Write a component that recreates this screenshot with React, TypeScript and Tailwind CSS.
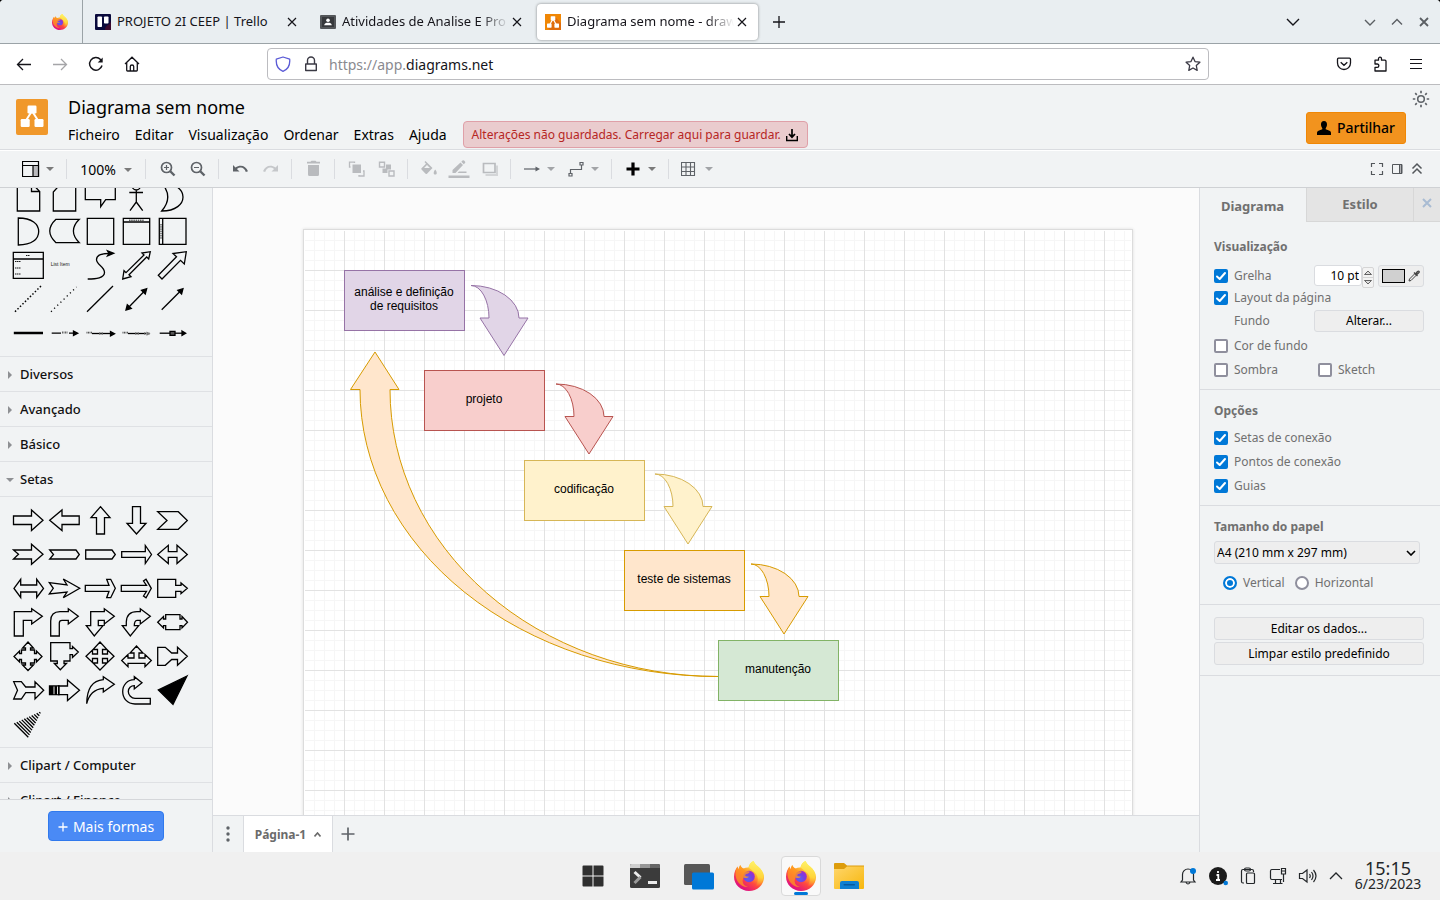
import type { ReactNode } from 'react';

/* ---------- shared helpers ---------- */

function Glyph({ size = 16, children, className = '' }: { size?: number; children: ReactNode; className?: string }) {
  return (
    <svg
      width={size}
      height={size}
      viewBox={`0 0 ${size} ${size}`}
      fill="none"
      stroke="currentColor"
      className={`shrink-0 ${className}`}
      aria-hidden="true"
    >
      {children}
    </svg>
  );
}

function FirefoxLogo({ size, id }: { size: number; id: string }) {
  return (
    <svg width={size} height={size} viewBox="0 0 30 30" className="shrink-0" aria-hidden="true">
      <defs>
        <linearGradient id={`${id}-body`} x1="0.8" y1="0.1" x2="0.25" y2="0.95">
          <stop offset="0.05" stopColor="#fff44f" />
          <stop offset="0.4" stopColor="#ffa22b" />
          <stop offset="0.62" stopColor="#ff4a3e" />
          <stop offset="0.95" stopColor="#e0127f" />
        </linearGradient>
        <linearGradient id={`${id}-flame`} x1="0.6" y1="0" x2="0.5" y2="1">
          <stop offset="0" stopColor="#fff36b" />
          <stop offset="0.6" stopColor="#ffd53a" />
          <stop offset="1" stopColor="#ff8c2a" stopOpacity="0" />
        </linearGradient>
        <radialGradient id={`${id}-globe`} cx="0.4" cy="0.7" r="0.7">
          <stop offset="0" stopColor="#5a5ff0" />
          <stop offset="0.6" stopColor="#7a3ee0" />
          <stop offset="1" stopColor="#a52bc8" />
        </radialGradient>
      </defs>
      <path
        d="M19.500 0c1 2.200 2.500 3.800 4.300 5.300 3.600 3 6.200 6.500 6.200 10.700C30 24 23.300 30 15 30S0 23.800 0 15.800C0 11 2 7.500 3.600 5.500l.6 3 2-4.500c.8 2 1.800 3 3.300 3.500 1.700-.9 3.500-1.200 5-1C15 3.500 17 1.200 19.500 0Z"
        fill={`url(#${id}-body)`}
      />
      <path
        d="M19.500 0c1 2.200 2.500 3.800 4.300 5.300C27.500 8.300 29.600 12 29.300 16c-.4 6-5 9.500-8.800 10 3.500-3.500 4-8 2.500-11.500-1.500-3.300-5-5-8.500-8C15 3.500 17 1.200 19.500 0Z"
        fill={`url(#${id}-flame)`}
      />
      <circle cx="15" cy="15.500" r="5.800" fill={`url(#${id}-globe)`} />
      <path
        d="M3.600 5.500l.6 3 2-4.500c.8 2 1.800 3 3.300 3.500 1 2 2.500 2.800 5.500 2.800 1 0 1 1.200-.5 1.900-1.500.7-3 .7-3.400 2.300 1 1 2.500 1 3.900 1.300-1.500 1.700-4 1.500-5.500.7-2 4-.5 8 4.500 9.500C6 26.500 1.200 19 1.500 12c.2-2.800 1-4.800 2.100-6.500Z"
        fill="#ff9a1f"
        fillOpacity="0.75"
      />
    </svg>
  );
}

/* ---------- browser chrome ---------- */

function CloseGlyph() {
  return (
    <Glyph>
      <path d="M4 4l8 8M12 4l-8 8" strokeWidth="1.200" />
    </Glyph>
  );
}

function BrowserTab({ icon, title, fade = false, active = false }: { icon: ReactNode; title: string; fade?: boolean; active?: boolean }) {
  return (
    <div
      className={`mx-0.5 flex h-9 w-[221px] min-w-0 items-center rounded px-2 ${
        active ? 'bg-white shadow-[0_0_3px_rgba(0,0,0,0.45)]' : ''
      }`}
    >
      {icon}
      <button
        className={`ml-[6px] min-w-0 flex-1 overflow-hidden text-left text-[13px] whitespace-nowrap ${
          fade ? '[mask-image:linear-gradient(to_left,transparent,black_28px)]' : ''
        }`}
      >
        {title}
      </button>
      <button aria-label="Fechar separador">
        <CloseGlyph />
      </button>
    </div>
  );
}

function TabStrip() {
  return (
    <div className="flex h-11 shrink-0 items-center border-b border-[#9ba3a7] bg-[#e9eef1] text-[#15141a]">
      <div className="flex h-full w-[83px] shrink-0 items-center border-r border-[#9ba3a7] pl-[52px]">
        <FirefoxLogo size={16} id="ff-pin" />
      </div>
      <div className="flex min-w-0 pl-0.5">
        <BrowserTab
          title="PROJETO 2I CEEP | Trello"
          icon={
            <svg width="16" height="16" viewBox="0 0 16 16" className="shrink-0" aria-hidden="true">
              <rect width="16" height="16" rx="1" fill="#0a0a3c" />
              <path d="M10 16C10 10 16 12 16 6V16Z" fill="#3c0a2e" />
              <rect x="2.500" y="2.500" width="4.500" height="10.500" rx="0.800" fill="#fff" />
              <rect x="9" y="2.500" width="4.500" height="7" rx="0.800" fill="#fff" />
            </svg>
          }
        />
        <BrowserTab
          fade
          title="Atividades de Analise E Pro"
          icon={
            <svg width="16" height="16" viewBox="0 0 16 16" className="shrink-0" aria-hidden="true">
              <rect y="1" width="16" height="14" rx="1" fill="#54575a" />
              <rect x="2" y="3" width="12" height="10" fill="#37393c" />
              <circle cx="8" cy="6.200" r="1.800" fill="#fff" />
              <path d="M4.200 11.300C4.500 9 6 8.700 8 8.700s3.500.3 3.800 2.600Z" fill="#fff" />
            </svg>
          }
        />
        <BrowserTab
          active
          fade
          title="Diagrama sem nome - draw"
          icon={
            <svg width="16" height="16" viewBox="0 0 16 16" className="shrink-0" aria-hidden="true">
              <rect width="16" height="16" fill="#f08705" />
              <path d="M10 3L16 9V16H5L2 13Z" fill="#df6c0c" />
              <path d="M8 5L4.500 11M8 5l3.500 6" stroke="#fff" strokeWidth="1.200" />
              <rect x="5.700" y="2.200" width="4.600" height="4.200" rx="0.600" fill="#fff" />
              <rect x="2" y="9.500" width="4.600" height="4.200" rx="0.600" fill="#fff" />
              <rect x="9.400" y="9.500" width="4.600" height="4.200" rx="0.600" fill="#fff" />
            </svg>
          }
        />
      </div>
      <button aria-label="Novo separador" className="ml-[11px]">
        <Glyph>
          <path d="M8 2v12M2 8h12" strokeWidth="1.300" />
        </Glyph>
      </button>
      <div className="ml-auto flex items-center pr-2">
        <button aria-label="Listar separadores" className="mr-[61px]">
          <Glyph>
            <path d="M2 5l6 6 6-6" strokeWidth="1.400" />
          </Glyph>
        </button>
        <div className="flex gap-[11px] text-[#5b5f63]">
          <button aria-label="Minimizar">
            <Glyph>
              <path d="M3 6l5 5 5-5" strokeWidth="1.400" />
            </Glyph>
          </button>
          <button aria-label="Maximizar">
            <Glyph>
              <path d="M3 10.500l5-5 5 5" strokeWidth="1.400" />
            </Glyph>
          </button>
          <button aria-label="Fechar">
            <Glyph>
              <path d="M4 4l8 8M12 4l-8 8" strokeWidth="1.800" />
            </Glyph>
          </button>
        </div>
      </div>
    </div>
  );
}

function NavButton({ label, children, faded = false }: { label: string; children: ReactNode; faded?: boolean }) {
  return (
    <button aria-label={label} className={`flex w-9 justify-center ${faded ? 'text-[#a5a5a8]' : 'text-[#15141a]'}`}>
      <Glyph>{children}</Glyph>
    </button>
  );
}

function NavBar() {
  return (
    <div className="flex h-[41px] shrink-0 items-center border-b border-[#bcbcbf] bg-white px-[6px]">
      <div className="flex">
        <NavButton label="Recuar">
          <path d="M15 8.500H2M7 3L1.500 8.500 7 14" strokeWidth="1.300" />
        </NavButton>
        <NavButton label="Avançar" faded>
          <path d="M1 8.500h13M9 3L14.500 8.500 9 14" strokeWidth="1.300" />
        </NavButton>
        <NavButton label="Recarregar">
          <path d="M14 9.500A6.300 6.300 0 1 1 12.500 3.500L13.500 4.800" strokeWidth="1.500" />
          <path d="M14.700 1.500V6.500H9.700Z" fill="currentColor" stroke="none" />
        </NavButton>
        <NavButton label="Início">
          <path d="M1 8L8 1.200 15 8M2.700 6.800V14.200Q2.700 15 3.500 15H12.500Q13.300 15 13.300 14.200V6.800M6.300 15V10.500Q6.300 9 8 9T9.700 10.500V15" strokeWidth="1.300" />
        </NavButton>
      </div>
      <div className="mx-[117px] flex h-8 min-w-0 flex-1 items-center rounded border border-[#bcbcc0] px-[7px]">
        <Glyph>
          <path d="M8 1L14.700 3.200C15.200 9 12.500 13.500 8 15.300 3.500 13.500.8 9 1.300 3.200Z" stroke="#5b5bd6" strokeWidth="1.300" strokeLinejoin="round" />
        </Glyph>
        <Glyph className="ml-3 text-[#3a3944]">
          <path d="M4.500 8V4.500a3.500 3.500 0 0 1 7 0V8M2.700 8h10.600v6.500H2.700Z" strokeWidth="1.400" strokeLinejoin="round" />
        </Glyph>
        <label htmlFor="address" className="ml-[10px] pt-px text-sm text-[#8a8a90]">
          https://app.
        </label>
        <input
          id="address"
          defaultValue="diagrams.net"
          className="min-w-0 flex-1 pt-px text-sm text-[#15141a] outline-none"
        />
        <button aria-label="Adicionar aos marcadores" className="text-[#3a3944]">
          <Glyph>
            <path d="M8 1.200l2 4.400 4.900.6-3.600 3.300.9 4.900L8 12l-4.200 2.400.9-4.900L1.100 6.200 6 5.600Z" strokeWidth="1.300" strokeLinejoin="round" />
          </Glyph>
        </button>
      </div>
      <div className="flex">
        <NavButton label="Pocket">
          <path d="M2.500 2.200H13.500Q14.500 2.200 14.500 3.200V7A6.500 6.500 0 0 1 1.500 7V3.200Q1.500 2.200 2.500 2.200ZM4.700 6.200L8 9.300l3.300-3.100" strokeWidth="1.300" />
        </NavButton>
        <NavButton label="Extensões">
          <path d="M6.500 4.200V2.700a1.500 1.500 0 0 1 3 0V4.200H13Q14 4.200 14 5.200V15H3V11.300H5.200a1.500 1.500 0 0 0 0-3.300H3V4.200Z" strokeWidth="1.300" strokeLinejoin="round" />
        </NavButton>
        <NavButton label="Menu">
          <path d="M2 3.500h12M2 7.500h12M2 12.500h12" strokeWidth="1.200" />
        </NavButton>
      </div>
    </div>
  );
}

/* ---------- application header ---------- */

const menus = ['Ficheiro', 'Editar', 'Visualização', 'Ordenar', 'Extras', 'Ajuda'];

function AppHeader() {
  return (
    <header className="flex h-[65px] shrink-0 border-b border-[#dadce0] bg-[#f1f3f4] pl-4">
      <svg width="32" height="36" viewBox="0 0 32 36" className="mt-[14px] shrink-0" aria-hidden="true">
        <rect width="32" height="36" rx="2" fill="#f0982b" />
        <path d="M16 12L9 23M16 12l7 11" stroke="#fff" strokeWidth="2" />
        <rect x="11.500" y="6.500" width="9" height="8" rx="1.200" fill="#fff" />
        <rect x="4.700" y="20" width="9" height="8" rx="1.200" fill="#fff" />
        <rect x="18.500" y="20" width="9" height="8" rx="1.200" fill="#fff" />
      </svg>
      <div className="ml-5 pt-[10px]">
        <a href="#rename" className="block text-lg leading-6 text-black">
          Diagrama sem nome
        </a>
        <div className="mt-[2px] flex items-center">
          <nav className="flex gap-[15px] text-sm text-black">
            {menus.map((m) => (
              <a key={m} href="#menu">
                {m}
              </a>
            ))}
          </nav>
          <button className="ml-4 flex h-[27px] items-center rounded-sm border border-[#dfa0a8] bg-[#eaccce] px-2 text-xs whitespace-nowrap text-[#b62623]">
            Alterações não guardadas. Carregar aqui para guardar.
            <Glyph size={14} className="ml-1 text-black">
              <path d="M1.700 8v4.500h10.600V8" strokeWidth="1.400" />
              <path d="M7 1v8M4 6l3 3.200L10 6" strokeWidth="1.700" />
            </Glyph>
          </button>
        </div>
      </div>
      <div className="ml-auto flex">
        <button className="mt-[27px] flex h-8 w-[100px] items-center justify-center gap-[6px] rounded-[3px] border border-[#f08705] bg-[#f2931e] text-sm font-medium text-black">
          <svg width="14" height="14" viewBox="0 0 14 14" aria-hidden="true">
            <path d="M7 0C9 0 10.200 1.500 10 3.800 9.900 5.500 9.200 6.500 8.700 7.200V8.200L12.500 9.800C13.700 10.300 14 11.200 14 12.200V14H0V12.200C0 11.200.3 10.300 1.500 9.800L5.300 8.200V7.200C4.800 6.500 4.100 5.500 4 3.800 3.800 1.500 5 0 7 0Z" />
          </svg>
          Partilhar
        </button>
        <button aria-label="Aparência" className="mt-[5px] mr-[10px] ml-[6px] self-start text-[#5f6368]">
          <Glyph size={18}>
            <circle cx="9" cy="9" r="3.300" strokeWidth="1.600" />
            <path d="M9 .8v2.500M9 14.700v2.500M.8 9h2.500M14.700 9h2.500M3.200 3.200l1.600 1.600M13.200 13.200l1.600 1.600M14.800 3.200l-1.600 1.600M4.800 13.200l-1.600 1.600" strokeWidth="1.700" />
          </Glyph>
        </button>
      </div>
    </header>
  );
}

/* ---------- toolbar ---------- */

function Caret({ className = 'text-[#7a7a7a]' }: { className?: string }) {
  return (
    <svg width="8" height="4" viewBox="0 0 8 4" fill="currentColor" className={className} aria-hidden="true">
      <path d="M0 0H8L4 4Z" />
    </svg>
  );
}

function Sep() {
  return <span className="mx-[6px] h-5 w-px bg-[#dadce0]" />;
}

function Tool({ label, children, className = 'text-[#5f6368]' }: { label: string; children: ReactNode; className?: string }) {
  return (
    <button aria-label={label} className={`flex w-[30px] justify-center ${className}`}>
      <Glyph size={18}>{children}</Glyph>
    </button>
  );
}

function DropTool({ label, children, className, caret }: { label: string; children: ReactNode; className: string; caret?: string }) {
  return (
    <button aria-label={label} className={`flex w-11 items-center justify-center gap-[6px] ${className}`}>
      <Glyph size={18}>{children}</Glyph>
      <Caret className={caret} />
    </button>
  );
}

function Toolbar() {
  return (
    <div className="flex h-[38px] shrink-0 items-center border-t border-b border-t-white border-b-[#cfd1d4] bg-[#f1f3f4] pl-4">
      <DropTool label="Vista" className="text-black">
        <path d="M.5 1.500H16.500V16.500H.5ZM.5 5.500H16.500" strokeWidth="1.200" />
        <path d="M11 5.500H16.500V16.500H11Z" fill="#b9b9bc" strokeWidth="1.200" />
      </DropTool>
      <Sep />
      <button className="flex w-[66px] items-center justify-center gap-2 pt-[2px] text-sm text-black">
        100% <Caret />
      </button>
      <Sep />
      <Tool label="Ampliar">
        <circle cx="8.500" cy="7.500" r="5" strokeWidth="1.700" />
        <path d="M12 11l4.500 4.500" strokeWidth="2.400" />
        <path d="M8.500 5v5M6 7.500h5" strokeWidth="1.200" />
      </Tool>
      <Tool label="Reduzir">
        <circle cx="8.500" cy="7.500" r="5" strokeWidth="1.700" />
        <path d="M12 11l4.500 4.500" strokeWidth="2.400" />
        <path d="M6 7.500h5" strokeWidth="1.200" />
      </Tool>
      <Sep />
      <Tool label="Anular">
        <path d="M2 5V11.500H8.500L5.900 8.900C9.500 6.300 13.500 7.500 14.800 12L17 11.300C15 5.500 9 4 4.500 7.500Z" fill="currentColor" stroke="none" />
      </Tool>
      <Tool label="Refazer" className="text-[#c5c7ca]">
        <path d="M17 5V11.500H10.500L13.100 8.900C9.500 6.300 5.500 7.500 4.200 12L2 11.300C4 5.500 10 4 14.500 7.500Z" fill="currentColor" stroke="none" />
      </Tool>
      <Sep />
      <Tool label="Apagar" className="text-[#b9bbbe]">
        <path d="M3 1.700H6.500L7.500.8H11.500L12.500 1.700H16V3.500H3ZM4 5H15V14.500Q15 16 13.500 16H5.500Q4 16 4 14.500Z" fill="currentColor" stroke="none" />
      </Tool>
      <Sep />
      <Tool label="Para a frente" className="text-[#b9bbbe]">
        <path d="M5.500 4.500H14V13H5.500Z" fill="currentColor" stroke="none" />
        <path d="M3.500 7H2.500V2.200H7.500V3M12 15V16H17V11H16" strokeWidth="1.300" />
      </Tool>
      <Tool label="Para trás" className="text-[#b9bbbe]">
        <path d="M2.500 2.200H7.500V7H2.500ZM12 11H17V16H12Z" strokeWidth="1.400" />
        <path d="M9 4.500H14V9.500H10.500V13H5.500V8.500H9Z" fill="currentColor" stroke="none" />
      </Tool>
      <Sep />
      <Tool label="Cor de preenchimento" className="text-[#b9bbbe]">
        <path d="M5.500 1L12.500 8 7 13.700Q6.300 14.300 5.600 13.700L1.500 9.500Q1 8.800 1.500 8.200L6 3.700L4.500 2ZM4 8H10L7 5Z" fill="currentColor" stroke="none" />
        <path d="M15.200 9.500C17.500 12.500 17 14.500 15.200 14.500S13 12.500 15.200 9.500Z" fill="currentColor" stroke="none" />
      </Tool>
      <button aria-label="Cor da linha" className="flex w-[30px] justify-center text-[#b9bbbe]">
        <svg width="22" height="20" viewBox="0 0 22 20" fill="currentColor" aria-hidden="true">
          <path d="M4.500 14V11L12.500 3.500 15 6 7.500 14ZM13.300 2.700L14.500 1.500Q15.300.8 16 1.500L17 2.500Q17.700 3.300 17 4L15.800 5.200ZM11 12.500H18.500V14H9.500ZM.5 16.500H21.500V19H.5Z" />
        </svg>
      </button>
      <Tool label="Sombra" className="text-[#b9bbbe]">
        <path d="M5.500 14V16H18V5.500H16V14Z" fill="#d3d5d7" stroke="none" />
        <path d="M3.500 3.500H15V12.500H3.500Z" strokeWidth="1.700" />
      </Tool>
      <Sep />
      <DropTool label="Ligação" className="text-[#5f6368]" caret="text-[#a2a4a7]">
        <path d="M1 9H14" strokeWidth="1.200" />
        <path d="M12.500 6.500L17 9 12.500 11.500Z" fill="currentColor" stroke="none" />
      </DropTool>
      <DropTool label="Pontos de passagem" className="text-[#5f6368]" caret="text-[#a2a4a7]">
        <path d="M3.500 13.500V9.500H14.500V5M2 13.500H5V16H2ZM13 2.500H16V5H13Z" strokeWidth="1.200" />
      </DropTool>
      <Sep />
      <DropTool label="Inserir" className="text-black">
        <path d="M9 2.500V15.500M2.500 9H15.500" strokeWidth="3.200" />
      </DropTool>
      <Sep />
      <DropTool label="Tabela" className="text-[#5f6368]" caret="text-[#a2a4a7]">
        <path d="M.5 2.500H13.500V15.500H.5ZM5 2.500V15.500M9.500 2.500V15.500M.5 7H13.500M.5 11.500H13.500" strokeWidth="1.100" />
      </DropTool>
      <div className="ml-auto flex gap-1 pr-[15px] text-[#53575b]">
        <button aria-label="Ecrã inteiro">
          <Glyph>
            <path d="M2.500 6V2.500H6M10 2.500H13.500V6M13.500 10V13.500H10M6 13.500H2.500V10" strokeWidth="1.200" />
          </Glyph>
        </button>
        <button aria-label="Formatar">
          <Glyph>
            <path d="M10.500 3.500H13V12.500H10.500Z" fill="#b0b0b3" strokeWidth="1" />
            <path d="M3.500 3.500H12.500V12.500H3.500Z" strokeWidth="1" />
          </Glyph>
        </button>
        <button aria-label="Recolher">
          <Glyph>
            <path d="M3.500 7.500L8 3l4.500 4.500M3.500 12.500L8 8l4.500 4.500" strokeWidth="1.500" />
          </Glyph>
        </button>
      </div>
    </div>
  );
}

/* ---------- shape library ---------- */

const arrowShapes: ReactNode[] = [
  <path d="M3.500 13H21.500V7L33 17.300 21.500 27.600V21.500H3.500Z" />,
  <path d="M33.200 13H16V7L3.700 17.300 16 27.600V21.500H33.200Z" />,
  <path d="M18.500 3.700L28 14.700H22.500V31H14.500V14.700H9Z" />,
  <path d="M14.500 3.700H22.500V20.300H28L18.500 31 9 20.300H14.500Z" />,
  <path d="M3.700 8.700H24.300L33.300 17.500 24.300 26.300H3.700L13 17.500Z" />,
  <path d="M3.500 13H21.500V7.300L33 17.300 21.500 27.300V22H3.500L8.500 17.300Z" />,
  <path d="M3.700 13H30L33.300 17.500 30 22H3.700L7.500 17.500Z" />,
  <path d="M3.700 13H30L33.300 17.500 30 22H3.700Z" />,
  <path d="M3.700 14.700H27.300V8.500L33.500 17.500 27.300 26.500V20.300H3.700Z" />,
  <path d="M3.700 17.400L14.300 8.300V14.700H23V8.300L33.300 17.400 23 26.500V20.300H14.300V26.500Z" />,
  <path d="M4 17.400L10.700 8.300V14H26.700V8.300L33.500 17.400 26.700 26.500V21H10.700V26.500Z" />,
  <path d="M3.300 11.700L21 14 17.300 8 33.700 17.300 17.300 26.700 21 21 3.300 23 7.300 17.300Z" />,
  <path d="M3.300 14.300H27L24.700 8.300H28.700L33.300 17.300 28.700 26.700H24.700L27 20.300H3.300Z" />,
  <path d="M3.300 14.300H28.500L25.500 10 28 8.300 33.300 17.300 28 26.700 25.500 25 28.500 20.300H3.300Z" />,
  <path d="M3.700 8.300H21.700V14.300H27V12L33.300 17.300 27 22.700V20.300H21.700V26.300H3.700Z" />,
  <path d="M4.300 31V6.700H21.700V3.700L32.300 11.300 21.700 19V15.300H13.300V31Z" />,
  <path d="M4.700 31V16Q4.700 6.700 14 6.700H22.300V3.700L32.300 11.300 22.300 19V15.300H16Q13.300 15.300 13.300 18V31Z" />,
  <path d="M4.300 20.700H8.700V6.700H22.300V3.700L32.300 11.300 22.300 19V15.300H16.300V20.700H21L12.300 31ZM22.300 15.300V20.700" />,
  <path d="M4.300 20.700H8.300V17Q8.700 6.700 19 6.700H22.300V3.700L32.300 11.300 22.300 19V15.300H19Q16.300 15.500 16.300 20.700H20.700L12.300 31Z" />,
  <path d="M3.700 17.300L9.500 11.500V14H11.700V9.700H26V14H28V11.500L33.500 17.300 28 23V20.700H26V24.700H11.700V20.700H9.500V23Z" />,
  <path d="M18 3L23.500 9H20.500V11H24.500V14.500H26.500V12L32 17.500 26.500 23V20.500H24.500V24H20.500V26H23.500L18 31.500 12.500 26H15.500V24H11.500V20.500H9.500V23L4 17.500 9.500 12V14.500H11.500V11H15.500V9H12.500Z" />,
  <path d="M4.700 3.700H24V9.700H26.500V7.500L32.300 13 26.500 18.500V15.700H24V22H18V24.500H20.500L14.300 30.700 8.300 24.500H11.300V22H4.700Z" />,
  <path d="M18 3L25 10.500H20.500V15H25.500V11L32 17.200 25.500 23.500V19.500H20.500V24H25L18 31 11 24H15.500V19.500H10.500V23.500L4 17.200 10.500 11V15H15.500V10.500H11Z" />,
  <path d="M18.500 7L25 14H21V19H27V15.500L33.300 21.500 27 27.700V24.300H10V27.700L3.700 21.500 10 15.500V19H16V14H12Z" />,
  <path d="M3.700 8.300H11.300L17.700 14H23.500V8.300L33.300 17.300 23.500 26.300V20.500H17.700L11.300 26.300H3.700Z" />,
  <path d="M3.700 8.700H11.300L15.700 14H25V8.700L33.700 17.300 25 26V19.700H15.700L11.300 26H3.700L7.500 17.300Z" />,
  <>
    <path d="M12.500 13H21.500V7L33.500 17.300 21.500 27.600V21.700H12.500Z" />
    <path d="M3.500 13H13V21.700H3.500Z" fill="black" />
    <path d="M8 13.500V21.200M11.500 13.500V21.200" stroke="white" strokeWidth="0.900" />
  </>,
  <path d="M4.700 30.700Q5 8 21.300 6.700V3.700L32.300 11.300 21.300 19V15.300Q8 16.500 4.700 30.700Z" />,
  <path d="M32.300 25.300V31H17C9 31 4.700 25 4.700 18.500S9.500 6.700 16.300 6.700V3.700L24 9.700 16.300 16V12.700C13 12.700 10.300 15 10.300 18.500S13.500 25.300 17 25.300Z" />,
  <path d="M33 3L4.300 17 19 31.300Z" fill="black" />,
  <path
    d={Array.from({ length: 11 }, (_, i) => {
      const t = i / 11;
      const mix = (a: number, b: number) => (a + (b - a) * t).toFixed(1);
      return `M${mix(4.3, 31.7)} ${mix(16.3, 4)}L${mix(18.3, 31.7)} ${mix(30.3, 4)}`;
    }).join('')}
  />,
];

const generalShapes: ReactNode[] = [
  <path d="M7.300 3H21.500L29.700 11.500V31H7.300ZM21.500 3V11.500H29.700" />,
  <path d="M15.500 3H29.700V31H7.300V12Z" />,
  <path d="M3.300 3H33.300V19.700H23.700L18.700 26.700V19.700H3.300Z" />,
  <path d="M18.300 10V22M11.300 12.500H25M18.300 22L12 30.700M18.300 22L24.700 30.700M22.300 6a4 4 0 1 1-8 0a4 4 0 1 1 8 0" />,
  <path d="M7.700 3C22 3 29 10 29 17S22 31 7.700 31C15.500 22 15.500 12 7.700 3Z" />,
  <path d="M8.300 4C22 4 28.700 10 28.700 17.500S22 31 8.300 31Z" />,
  <path d="M10 5.300H33.300Q21.500 17 33.300 28.700H10Q-2.500 17 10 5.300Z" />,
  <path d="M5.300 4.300H31.700V30.300H5.300Z" />,
  <>
    <path d="M5.300 4.300H31.700V30.300H5.300ZM5.300 8H31.700" />
    <path d="M11 6.200H26" strokeWidth="0.900" strokeDasharray="1.500 0.700" />
  </>,
  <>
    <path d="M5.300 4.300H32V30.300H5.300ZM8.700 4.300V30.300" />
    <path d="M7 10V25" strokeWidth="0.900" strokeDasharray="1.500 0.700" />
  </>,
  <>
    <path d="M3.300 4.300H33.300V30.300H3.300ZM3.300 11H33.300" />
    <path d="M16 7.500H20M5 13.500H11M5 20H11M5 26H11" strokeWidth="0.900" strokeDasharray="1.500 0.500" />
  </>,
  <text x="4.700" y="18" fontSize="5" fill="#222" stroke="none" fontFamily="Liberation Sans">
    List Item
  </text>,
  <>
    <path d="M5.700 31C14 31 22.500 30 22.500 24.500C22.500 18 14.500 17 14.500 11.500C14.500 7 20 5.300 29 5.300" />
    <path d="M25.500 2.800L31.700 5.300 25.500 7.900 27 5.300Z" fill="black" />
  </>,
  <path d="M32.300 3.700L30.700 11 28.700 9 11 26.700 13 28.700 4.700 31 6 22.700 8 24.700 26 7 24 5Z" />,
  <path d="M32.300 3.700L30.300 16 26.500 12.300 8 31 4.300 27.300 22.500 8.700 19 5.500Z" />,
  <path d="M5 29.700L31 4" strokeDasharray="1.500 2" strokeWidth="1.500" />,
  <path d="M5 29.700L30.500 5" strokeDasharray="1.200 3.200" strokeWidth="1.300" />,
  <path d="M5 29.700L31 4" />,
  <>
    <path d="M10 26L27 8.500" />
    <path d="M28.700 6.700L27.300 12 23.500 8.200ZM8 28L9.300 22.700 13.300 26.500Z" fill="black" />
  </>,
  <>
    <path d="M7.700 27.700L27 8.500" />
    <path d="M29 6.700L27.600 12 23.800 8.200Z" fill="black" />
  </>,
  <path d="M3.800 17H33" strokeWidth="2.500" />,
  <>
    <path d="M5.700 17.200H15M23 17.200H29" />
    <path d="M16 16.500H22" strokeWidth="1.800" strokeDasharray="1 0.500" stroke="#666" />
    <path d="M27.500 15L31.700 17.200 27.500 19.400Z" fill="black" />
  </>,
  <>
    <path d="M10 17.500H30" />
    <path d="M4.500 16.700H10M17 17.500H21" strokeWidth="1.800" strokeDasharray="1 0.500" stroke="#555" />
    <path d="M28.500 15.600L32.500 17.700 28.500 19.800Z" fill="black" />
  </>,
  <>
    <path d="M10 17.500H28" />
    <path d="M4.500 16.700H10M17 17.500H21M26 17.500H32" strokeWidth="1.800" strokeDasharray="1 0.500" stroke="#555" />
    <path d="M28.500 15.600L32.500 17.700 28.500 19.800Z" fill="#777" stroke="none" />
  </>,
  <>
    <path d="M5.700 17.200H29" />
    <path d="M16 15.300H21V19.300H16Z" fill="#555" />
    <path d="M28 15L31.700 17.200 28 19.400Z" fill="black" />
  </>,
];

function ShapeGrid({ shapes, name }: { shapes: ReactNode[]; name: string }) {
  return (
    <div className="grid grid-cols-[repeat(5,36px)] border-b border-[#dfe1e4] py-[6px] pl-[10px]">
      {shapes.map((s, i) => (
        <button key={i} aria-label={`${name} ${i + 1}`} className="h-[34px]">
          <svg width="36" height="34" viewBox="0 0 36 34" fill="none" stroke="black" strokeWidth="1.300" aria-hidden="true">
            {s}
          </svg>
        </button>
      ))}
    </div>
  );
}

function SectionTitle({ title, open = false }: { title: string; open?: boolean }) {
  return (
    <button className="flex h-[35px] w-full items-center border-b border-[#dfe1e4] pt-px pl-[6px] text-left text-[13px] font-medium text-[#111]">
      <svg width="8" height="8" viewBox="0 0 8 8" fill="#8e9093" className="mr-[6px]" aria-hidden="true">
        <path d={open ? 'M0 2H8L4 6Z' : 'M2 0L6 4 2 8Z'} />
      </svg>
      {title}
    </button>
  );
}

function Sidebar() {
  return (
    <aside className="flex w-[213px] shrink-0 flex-col border-r border-[#dadce0] bg-[#f1f3f4]">
      <div className="min-h-0 flex-1 overflow-hidden border-b border-[#d5d7da]">
        <div className="-mt-[14px]">
          <ShapeGrid shapes={generalShapes} name="Geral" />
          <SectionTitle title="Diversos" />
          <SectionTitle title="Avançado" />
          <SectionTitle title="Básico" />
          <SectionTitle title="Setas" open />
          <ShapeGrid shapes={arrowShapes} name="Seta" />
          <SectionTitle title="Clipart / Computer" />
          <SectionTitle title="Clipart / Finance" />
        </div>
      </div>
      <div className="flex h-[52px] shrink-0 justify-center pt-[11px]">
        <button className="flex h-[30px] w-[116px] items-center justify-center gap-[5px] rounded-sm border border-[#3079ed] bg-[#4a8af5] pt-px text-sm text-white">
          <svg width="10" height="10" viewBox="0 0 10 10" stroke="white" strokeWidth="1.300" aria-hidden="true">
            <path d="M5 0.500V9.500M0.500 5H9.500" />
          </svg>
          Mais formas
        </button>
      </div>
    </aside>
  );
}

/* ---------- diagram ---------- */

const nodes = [
  { text: 'análise e definição de requisitos', className: 'left-[40px] top-[40px] border-[#9673a6] bg-[#e1d5e7]' },
  { text: 'projeto', className: 'left-[120px] top-[140px] border-[#b85450] bg-[#f8cecc]' },
  { text: 'codificação', className: 'left-[220px] top-[230px] border-[#d6b656] bg-[#fff2cc]' },
  { text: 'teste de sistemas', className: 'left-[320px] top-[320px] border-[#d79b00] bg-[#ffe6cc]' },
  { text: 'manutenção', className: 'left-[414px] top-[410px] border-[#82b366] bg-[#d5e8d4]' },
];

const jumps = [
  { x: 200, y: 125.5, fill: '#e1d5e7', stroke: '#9673a6' },
  { x: 285, y: 224, fill: '#f8cecc', stroke: '#b85450' },
  { x: 384, y: 314, fill: '#fff2cc', stroke: '#d6b656' },
  { x: 480, y: 404, fill: '#ffe6cc', stroke: '#d79b00' },
];

function Canvas() {
  return (
    <main className="flex min-w-0 flex-1 flex-col">
      <div className="min-h-0 flex-1 overflow-hidden bg-[#fbfbfb] pt-[41px] pl-[90px]">
        <div className="relative h-[1170px] w-[830px] border border-[#dcdcdc] bg-white shadow-[0_0_3px_rgba(0,0,0,0.12)]">
          <svg width="828" height="1168" viewBox="0 0 828 1168" className="block" aria-hidden="true">
            <defs>
              <pattern id="grid" width="40" height="40" patternUnits="userSpaceOnUse">
                <path d="M10.500 0V40M20.500 0V40M30.500 0V40M0 10.500H40M0 20.500H40M0 30.500H40" stroke="#f6f6f6" />
                <path d="M0.500 0V40M0 0.500H40" stroke="#e2e2e2" />
              </pattern>
            </defs>
            <rect x="1" y="1" width="826" height="1166" fill="url(#grid)" />
            {jumps.map((j) => (
              <path
                key={j.x}
                transform={`translate(${j.x} ${j.y})`}
                d="M-33 -70A48 32.500 0 0 1 15 -37.500H24L0 0L-24 -37.500H-15A18 32.500 0 0 0 -33 -70Z"
                fill={j.fill}
                stroke={j.stroke}
              />
            ))}
            <path
              d="M414.500 446.500A358 287 0 0 1 56 159.500H46.500L71 122L95 159.500H86A328 287 0 0 0 414.500 446.500Z"
              fill="#ffe6cc"
              stroke="#d79b00"
            />
          </svg>
          {nodes.map((n) => (
            <div
              key={n.text}
              className={`absolute flex h-[61px] w-[121px] items-center justify-center border pr-[9px] pb-1 pl-2 text-center font-['Liberation_Sans',sans-serif] text-xs leading-[14px] text-black ${n.className}`}
            >
              {n.text}
            </div>
          ))}
        </div>
      </div>
      <div className="flex h-[37px] shrink-0 items-center border-t border-[#dadce0] bg-[#f1f3f4] text-[#5f6368]">
        <button aria-label="Páginas" className="flex w-[30px] justify-center">
          <svg width="4" height="16" viewBox="0 0 4 16" fill="#5f6368" aria-hidden="true">
            <circle cx="2" cy="2" r="1.700" />
            <circle cx="2" cy="8" r="1.700" />
            <circle cx="2" cy="14" r="1.700" />
          </svg>
        </button>
        <button className="flex h-full w-[90px] items-center justify-center gap-2 border-x border-[#dadce0] bg-white pt-px text-xs font-bold text-[#6b6b6b]">
          Página-1
          <svg width="7" height="5" viewBox="0 0 7 5" fill="none" stroke="#6b6b6b" strokeWidth="1.600" aria-hidden="true">
            <path d="M0.500 4.500L3.500 1 6.500 4.500" />
          </svg>
        </button>
        <button aria-label="Inserir página" className="ml-[7px]">
          <Glyph>
            <path d="M8 1.500v13M1.500 8h13" strokeWidth="1.700" />
          </Glyph>
        </button>
      </div>
    </main>
  );
}

/* ---------- format panel ---------- */

function Check({ id, label, checked = false, className = '' }: { id: string; label: string; checked?: boolean; className?: string }) {
  return (
    <div className={`flex items-center gap-[6px] ${className}`}>
      <span className="grid size-[14px] shrink-0">
        <input
          id={id}
          type="checkbox"
          defaultChecked={checked}
          className="peer col-start-1 row-start-1 size-[14px] appearance-none rounded-xs border-2 border-[#8f8f9d] bg-white checked:border-[#0078d7] checked:bg-[#0078d7]"
        />
        <svg
          viewBox="0 0 14 14"
          fill="none"
          stroke="white"
          strokeWidth="2"
          className="pointer-events-none col-start-1 row-start-1 hidden size-[14px] peer-checked:block"
          aria-hidden="true"
        >
          <path d="M3 7.500L5.700 10 11 4" strokeLinecap="round" strokeLinejoin="round" />
        </svg>
      </span>
      <label htmlFor={id} className="whitespace-nowrap">
        {label}
      </label>
    </div>
  );
}

function Radio({ id, label, checked = false }: { id: string; label: string; checked?: boolean }) {
  return (
    <div className="flex items-center gap-[6px]">
      <input
        id={id}
        type="radio"
        name="orientation"
        defaultChecked={checked}
        className="size-[14px] appearance-none rounded-full border-2 border-[#8f8f9d] bg-white checked:border-[#0078d7] checked:bg-[#0078d7] checked:shadow-[inset_0_0_0_2px_white]"
      />
      <label htmlFor={id}>{label}</label>
    </div>
  );
}

const panelButton = 'rounded-[3px] border border-[#dadce0] bg-[#eeeeee] text-xs text-black';

function FormatPanel() {
  return (
    <aside className="w-[241px] shrink-0 overflow-hidden border-l border-[#dadce0] bg-[#f1f3f4] text-xs text-[#707070]">
      <div className="flex h-[34px] text-[13px] font-bold">
        <button className="w-[106px] pt-1 pr-px">Diagrama</button>
        <button className="flex-1 border-b border-l border-[#d7d7d7] bg-[#e4e4e4] pt-px">Estilo</button>
        <button aria-label="Ocultar" className="flex w-[27px] items-center justify-center border-b border-l border-[#d7d7d7] bg-[#e4e4e4] pr-px pb-[3px] text-[#a9bcd3]">
          <svg width="10" height="10" viewBox="0 0 10 10" stroke="currentColor" strokeWidth="2" aria-hidden="true">
            <path d="M1 1l8 8M9 1l-8 8" />
          </svg>
        </button>
      </div>
      <section className="border-b border-[#dadce0] px-[14px] pt-3 pb-[7px]">
        <h2 className="mb-[6px] h-6 leading-[26px] font-bold">Visualização</h2>
        <div className="flex h-[23px] items-center">
          <Check id="grid-on" label="Grelha" checked className="w-[100px]" />
          <input
            aria-label="Tamanho da grelha"
            defaultValue="10 pt"
            className="h-[21px] w-12 rounded-[3px] border border-[#dadce0] bg-white pr-[2px] text-right text-xs text-black"
          />
          <span className="mt-1 flex h-[21px] w-3 flex-col rounded-[2px] border border-[#d5d5d5] bg-[#f3f3f3]">
            <button aria-label="Aumentar" className="flex flex-1 items-center justify-center border-b border-[#d5d5d5]">
              <svg width="8" height="5" viewBox="0 0 8 5" fill="#ddd" stroke="#555" strokeWidth="0.900" aria-hidden="true">
                <path d="M0.500 4.500L4 1 7.500 4.500Z" />
              </svg>
            </button>
            <button aria-label="Diminuir" className="flex flex-1 items-center justify-center">
              <svg width="8" height="5" viewBox="0 0 8 5" fill="#ddd" stroke="#555" strokeWidth="0.900" aria-hidden="true">
                <path d="M0.500 0.500L4 4 7.500 0.500Z" />
              </svg>
            </button>
          </span>
          <button aria-label="Cor da grelha" className="ml-1 flex h-[22px] w-[46px] items-center justify-center gap-[3px] rounded-[3px] border border-[#dadce0] bg-[#eeeeee]">
            <span className="h-[14px] w-[23px] border border-black bg-[#d0d0d0]" />
            <Glyph size={12} className="text-[#444]">
              <path d="M1 11L1.500 9 7 3.500 8.500 5 3 10.500Z" strokeWidth="1" />
              <path d="M6 2.500L9.500 6M8 3.500L9.500 1.500Q10.500.8 11 1.500T10.500 3L8.800 4.500" strokeWidth="1.400" />
            </Glyph>
          </button>
        </div>
        <Check id="page-view" label="Layout da página" checked className="h-[22px]" />
        <div className="flex h-6 items-center pl-5">
          <span className="w-20">Fundo</span>
          <button className={`h-[22px] w-[110px] ${panelButton}`}>Alterar...</button>
        </div>
        <Check id="bg-color" label="Cor de fundo" className="mt-px h-6" />
        <div className="flex h-6 items-center">
          <Check id="shadow" label="Sombra" className="w-[104px]" />
          <Check id="sketch" label="Sketch" />
        </div>
      </section>
      <section className="border-b border-[#dadce0] px-[14px] pt-2 pb-[7px]">
        <h2 className="mb-1 h-6 leading-[26px] font-bold">Opções</h2>
        <Check id="arrows" label="Setas de conexão" checked className="h-6" />
        <Check id="points" label="Pontos de conexão" checked className="h-6" />
        <Check id="guides" label="Guias" checked className="h-6" />
      </section>
      <section className="border-b border-[#dadce0] px-[14px] pt-2 pb-[9px]">
        <h2 className="mb-[3px] h-6 leading-[26px] font-bold">Tamanho do papel</h2>
        <div className="grid w-[206px] items-center">
          <select aria-label="Tamanho do papel" className={`col-start-1 row-start-1 h-[23px] appearance-none pl-[2px] ${panelButton}`}>
            <option>A4 (210 mm x 297 mm)</option>
          </select>
          <svg width="10" height="6" viewBox="0 0 10 6" fill="none" stroke="black" strokeWidth="1.600" className="pointer-events-none col-start-1 row-start-1 mr-1 justify-self-end" aria-hidden="true">
            <path d="M1 1L5 5 9 1" />
          </svg>
        </div>
        <div className="mt-[7px] flex h-6 items-center gap-[10px] pl-[9px]">
          <Radio id="vertical" label="Vertical" checked />
          <Radio id="horizontal" label="Horizontal" />
        </div>
      </section>
      <section className="flex flex-col gap-[2px] border-b border-[#dadce0] px-[14px] pt-3 pb-[10px]">
        <button className={`h-[23px] w-[210px] ${panelButton}`}>Editar os dados...</button>
        <button className={`h-[23px] w-[210px] ${panelButton}`}>Limpar estilo predefinido</button>
      </section>
    </aside>
  );
}

/* ---------- desktop taskbar ---------- */

function TrayButton({ label, children }: { label: string; children: ReactNode }) {
  return (
    <button aria-label={label} className="flex w-[30px] justify-center">
      <Glyph size={20}>{children}</Glyph>
    </button>
  );
}

function Taskbar() {
  return (
    <footer className="grid h-12 shrink-0 grid-cols-[1fr_auto_1fr] items-center bg-[#f0f0f0] text-[#232629]">
      <span />
      <div className="flex items-center pr-[2px]">
        <button aria-label="Iniciar" className="flex w-[52px] justify-center">
          <svg width="22" height="22" viewBox="0 0 22 22" fill="#2f2f2f" aria-hidden="true">
            <path d="M0.500 1.500Q.5.500 1.500.5H10.500V10.500H.5ZM11.500.5H20.500Q21.500.5 21.500 1.500V10.500H11.500ZM.5 11.500H10.500V21.500H1.500Q.5 21.500.5 20.500ZM11.500 11.500H21.500V20.500Q21.500 21.500 20.500 21.500H11.500Z" />
          </svg>
        </button>
        <button aria-label="Terminal" className="flex w-[52px] justify-center">
          <svg width="30" height="24" viewBox="0 0 30 24" aria-hidden="true">
            <rect width="30" height="24" rx="1.500" fill="#3b3b3b" />
            <path d="M1.500 0H10V4H0V1.500Q0 0 1.500 0Z" fill="#cfcfcf" />
            <rect x="10" width="10" height="4" fill="#979797" />
            <path d="M20 0H28.500Q30 0 30 1.500V4H20Z" fill="#666" />
            <path d="M4.500 8L10.500 13.500" stroke="#ececec" strokeWidth="3" />
            <path d="M10.500 13L4.500 19" stroke="#9a9a9a" strokeWidth="3" />
            <rect x="18" y="17" width="9" height="3" fill="#ececec" />
          </svg>
        </button>
        <button aria-label="Vista de tarefas" className="flex w-[52px] justify-center pt-[2px] pl-1">
          <svg width="30" height="26" viewBox="0 0 30 26" aria-hidden="true">
            <rect width="26" height="21" rx="1.500" fill="#575757" />
            <rect x="8" y="8.500" width="22" height="17" rx="1.500" fill="#0078d7" />
          </svg>
        </button>
        <button aria-label="Firefox" className="flex w-[52px] justify-center">
          <FirefoxLogo size={30} id="ff-launch" />
        </button>
        <button aria-label="Diagrama sem nome — Firefox" className="flex w-[52px] justify-center">
          <span className="relative flex size-10 items-center justify-center rounded border border-[#d9d9d9] bg-[#f9f9f9]">
            <FirefoxLogo size={30} id="ff-window" />
            <span className="absolute bottom-0 h-[3px] w-[14px] rounded-full bg-[#0078d7]" />
          </span>
        </button>
        <button aria-label="Ficheiros" className="flex w-11 justify-center">
          <svg width="30" height="28" viewBox="0 0 30 28" aria-hidden="true">
            <defs>
              <linearGradient id="folder" x1="0" y1="0" x2="1" y2="1">
                <stop offset="0" stopColor="#ffd66b" />
                <stop offset="1" stopColor="#f7b70d" />
              </linearGradient>
            </defs>
            <path d="M0 2Q0 1 1 1H10L13 3.500H30V10H0Z" fill="#dd9c0b" />
            <path d="M0 7H10L13 4.500H30V26Q30 27 29 27H1Q0 27 0 26Z" fill="url(#folder)" />
            <path d="M6 27V21Q6 19 8 19H23Q25 19 25 21V27Z" fill="#0d7fd2" />
            <rect x="9.500" y="22" width="11.500" height="1.500" rx="0.700" fill="#075a9e" />
          </svg>
        </button>
      </div>
      <div className="flex items-center justify-end pr-[19px]">
        <TrayButton label="Notificações">
          <path d="M3 16H17L15.500 14V8.500A5.500 5.500 0 0 0 4.500 8.500V14ZM8 16.500Q10 19.500 12 16.500" strokeWidth="1.200" />
          <circle cx="15" cy="5" r="3" fill="#0078d7" stroke="none" />
        </TrayButton>
        <TrayButton label="Informações">
          <circle cx="10" cy="10" r="9" fill="#1b1b1b" stroke="none" />
          <path d="M10 5V7M8.500 9H10.300V14M8 14H12" stroke="white" strokeWidth="1.800" />
          <circle cx="17.700" cy="17" r="2.300" fill="#0078d7" stroke="none" />
        </TrayButton>
        <TrayButton label="Área de transferência">
          <path d="M6 17H5Q3.500 17 3.500 15.500V5Q3.500 3.500 5 3.500H14Q15.500 3.500 15.500 5V6M6.500 3.500Q6.500 2 8 2H11Q12.500 2 12.500 3.500T11 5H8Q6.500 5 6.500 3.500ZM8.500 8Q8.500 7 9.500 7H15.500Q16.500 7 16.500 8V16.500Q16.500 17.500 15.500 17.500H9.500Q8.500 17.500 8.500 16.500Z" strokeWidth="1.200" />
        </TrayButton>
        <TrayButton label="Ecrã">
          <path d="M12 3.500H4Q2.500 3.500 2.500 5V12Q2.500 13.500 4 13.500H14M7.500 13.500V17.500M12.500 13.500V17.500M5 17.500H14.500M13.500 2.500H17.500V8H13.500ZM13.500 5H17.500M15.500 8V16" strokeWidth="1.200" />
        </TrayButton>
        <TrayButton label="Volume">
          <path d="M1.500 7.500H4.500L9 4V16L4.500 12.500H1.500ZM11.500 8Q13 10 11.500 12M13.500 6Q16.500 10 13.500 14M15.500 4Q20.500 10 15.500 16" strokeWidth="1.200" />
        </TrayButton>
        <button aria-label="Mostrar mais" className="flex w-[26px] justify-center">
          <Glyph>
            <path d="M2 11l6-6 6 6" strokeWidth="1.300" />
          </Glyph>
        </button>
        <time className="ml-[6px] flex w-[66px] flex-col items-center whitespace-nowrap">
          <span className="text-lg leading-4">15:15</span>
          <span className="text-sm leading-4">6/23/2023</span>
        </time>
      </div>
    </footer>
  );
}

export default function App() {
  return (
    <div className="flex h-dvh flex-col overflow-hidden bg-black font-['Noto_Sans',sans-serif]">
      <div className="flex min-h-0 flex-1 flex-col overflow-hidden rounded-t bg-[#f1f3f4]">
        <TabStrip />
        <NavBar />
        <AppHeader />
        <Toolbar />
        <div className="flex min-h-0 flex-1">
          <Sidebar />
          <Canvas />
          <FormatPanel />
        </div>
      </div>
      <Taskbar />
    </div>
  );
}
